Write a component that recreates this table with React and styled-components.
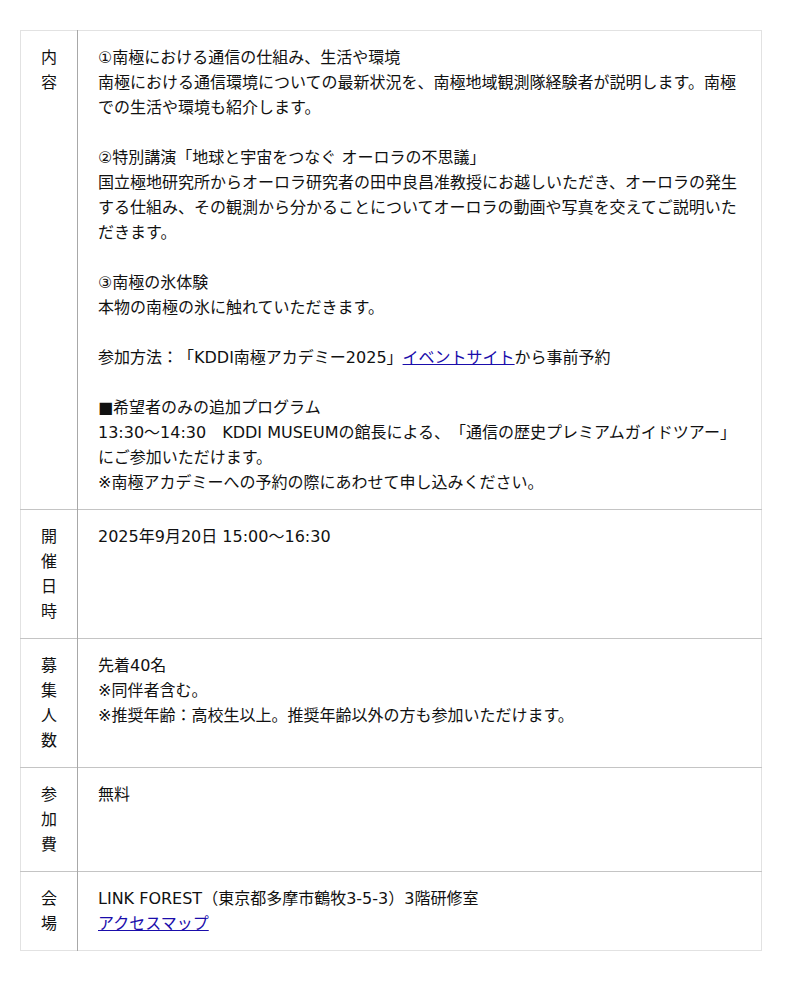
import React from "react";
import styled, { createGlobalStyle } from "styled-components";

const GlobalStyle = createGlobalStyle`
  html, body { margin: 0; padding: 0; background: #fff; }
  body {
    font-family: "DejaVu Sans", "Noto Sans CJK JP", sans-serif;
    font-size: 16px;
    color: #111;
    text-spacing-trim: space-all;
  }
`;

const Page = styled.div`
  padding: 30px 38px 30px 20px;
`;

const Table = styled.table`
  width: 742px;
  border-collapse: collapse;
  table-layout: fixed;
  border: 1px solid #e2e2e2;
`;

const Row = styled.tr`
  border-top: 1px solid #c4c4c4;
  &:first-child { border-top: 1px solid #e2e2e2; }
`;

const Label = styled.th`
  width: 16px;
  padding: 14px 20px 14px 20px;
  font-weight: normal;
  text-align: center;
  vertical-align: top;
  line-height: 25px;
  border-right: 1px solid #a8a8a8;
  word-break: break-all;
`;

const Cell = styled.td`
  padding: 14px 20px 14px 20px;
  vertical-align: top;
  text-align: left;
  line-height: 25px;
  text-spacing-trim: space-all;
`;

const Link = styled.a`
  color: #1a0dab;
  text-decoration: underline;
`;

export default function App() {
  return (
    <>
      <GlobalStyle />
      <Page>
        <Table>
          <tbody>
            <Row>
              <Label>内容</Label>
              <Cell>
                ①南極における通信の仕組み、生活や環境<br />
                南極における通信環境についての最新状況を、南極地域観測隊経験者が説明します。南極での生活や環境も紹介します。<br />
                <br />
                ②特別講演「地球と宇宙をつなぐ オーロラの不思議」<br />
                国立極地研究所からオーロラ研究者の田中良昌准教授にお越しいただき、オーロラの発生する仕組み、その観測から分かることについてオーロラの動画や写真を交えてご説明いただきます。<br />
                <br />
                ③南極の氷体験<br />
                本物の南極の氷に触れていただきます。<br />
                <br />
                参加方法：「KDDI南極アカデミー2025」<Link href="#">イベントサイト</Link>から事前予約<br />
                <br />
                ■希望者のみの追加プログラム<br />
                13:30～14:30　KDDI MUSEUMの館長による、「通信の歴史プレミアムガイドツアー」にご参加いただけます。<br />
                ※南極アカデミーへの予約の際にあわせて申し込みください。
              </Cell>
            </Row>
            <Row>
              <Label>開催日時</Label>
              <Cell>2025年9月20日 15:00～16:30</Cell>
            </Row>
            <Row>
              <Label>募集人数</Label>
              <Cell>
                先着40名<br />
                ※同伴者含む。<br />
                ※推奨年齢：高校生以上。推奨年齢以外の方も参加いただけます。
              </Cell>
            </Row>
            <Row>
              <Label>参加費</Label>
              <Cell>無料</Cell>
            </Row>
            <Row>
              <Label>会場</Label>
              <Cell>
                LINK FOREST（東京都多摩市鶴牧3-5-3）3階研修室<br />
                <Link href="#">アクセスマップ</Link>
              </Cell>
            </Row>
          </tbody>
        </Table>
      </Page>
    </>
  );
}
